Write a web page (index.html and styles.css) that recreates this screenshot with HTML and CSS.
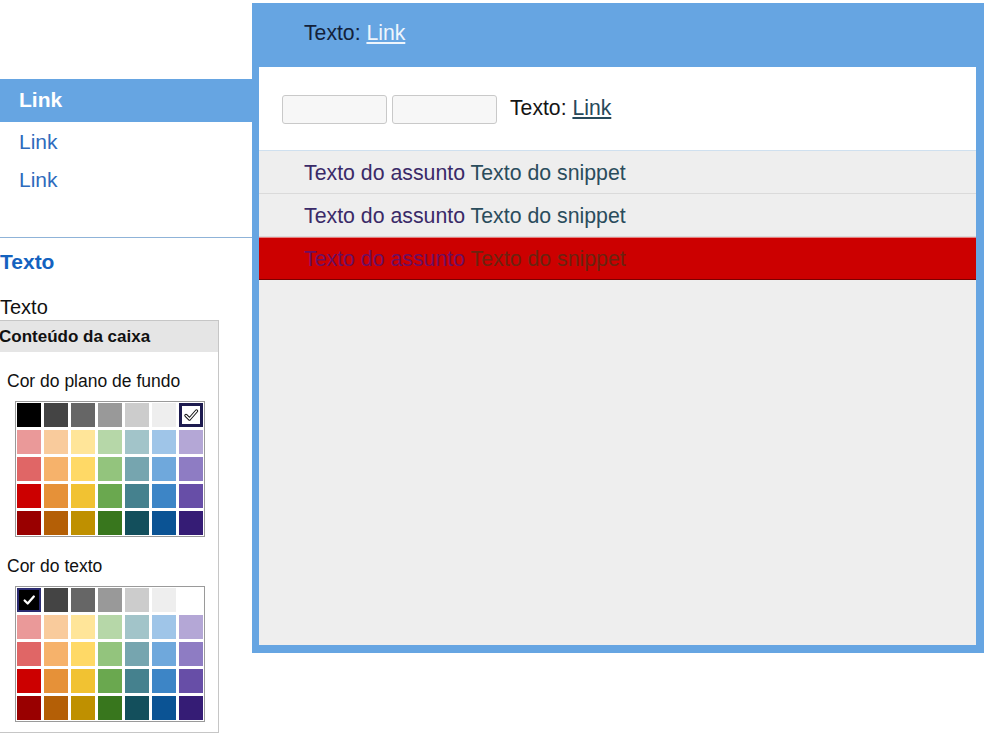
FILE: index.html
```html
<!DOCTYPE html>
<html lang="pt">
<head>
<meta charset="utf-8">
<title>Tema</title>
<link rel="stylesheet" href="styles.css">
</head>
<body>
<div class="page">
  <aside class="left">
    <nav class="nav">
      <div class="nav-item active">Link</div>
      <div class="nav-item"><a class="nav-link" href="#">Link</a></div>
      <div class="nav-item"><a class="nav-link" href="#">Link</a></div>
    </nav>
    <div class="sep"></div>
    <div class="title">Texto</div>
    <div class="plain">Texto</div>
    <div class="box">
      <div class="box-head">Conteúdo da caixa</div>
      <div class="box-label">Cor do plano de fundo</div>
      <div class="palette">
        <span class="c" style="background:#000000"></span>
        <span class="c" style="background:#444444"></span>
        <span class="c" style="background:#666666"></span>
        <span class="c" style="background:#999999"></span>
        <span class="c" style="background:#cccccc"></span>
        <span class="c" style="background:#eeeeee"></span>
        <span class="c sel-white" style="background:#ffffff"><svg class="chk" viewBox="0 0 16 16" width="16" height="16"><path d="M3 8.5 L6.5 12 L13.5 4" fill="none" stroke="#111" stroke-width="3.4" stroke-linecap="round" stroke-linejoin="round"/><path d="M3 8.5 L6.5 12 L13.5 4" fill="none" stroke="#fff" stroke-width="1.4" stroke-linecap="round" stroke-linejoin="round"/></svg></span>
        <span class="c" style="background:#ea9999"></span>
        <span class="c" style="background:#f9cb9c"></span>
        <span class="c" style="background:#ffe599"></span>
        <span class="c" style="background:#b6d7a8"></span>
        <span class="c" style="background:#a2c4c9"></span>
        <span class="c" style="background:#9fc5e8"></span>
        <span class="c" style="background:#b4a7d6"></span>
        <span class="c" style="background:#e06666"></span>
        <span class="c" style="background:#f6b26b"></span>
        <span class="c" style="background:#ffd966"></span>
        <span class="c" style="background:#93c47d"></span>
        <span class="c" style="background:#76a5af"></span>
        <span class="c" style="background:#6fa8dc"></span>
        <span class="c" style="background:#8e7cc3"></span>
        <span class="c" style="background:#cc0000"></span>
        <span class="c" style="background:#e69138"></span>
        <span class="c" style="background:#f1c232"></span>
        <span class="c" style="background:#6aa84f"></span>
        <span class="c" style="background:#45818e"></span>
        <span class="c" style="background:#3d85c6"></span>
        <span class="c" style="background:#674ea7"></span>
        <span class="c" style="background:#990000"></span>
        <span class="c" style="background:#b45f06"></span>
        <span class="c" style="background:#bf9000"></span>
        <span class="c" style="background:#38761d"></span>
        <span class="c" style="background:#134f5c"></span>
        <span class="c" style="background:#0b5394"></span>
        <span class="c" style="background:#351c75"></span>
      </div>
      <div class="box-label">Cor do texto</div>
      <div class="palette">
        <span class="c sel-black" style="background:#000000"><svg class="chk" viewBox="0 0 16 16" width="14" height="14"><path d="M3 8.5 L6.5 12 L13.5 4" fill="none" stroke="#fff" stroke-width="2.6" stroke-linecap="round" stroke-linejoin="round"/></svg></span>
        <span class="c" style="background:#444444"></span>
        <span class="c" style="background:#666666"></span>
        <span class="c" style="background:#999999"></span>
        <span class="c" style="background:#cccccc"></span>
        <span class="c" style="background:#eeeeee"></span>
        <span class="c" style="background:#ffffff"></span>
        <span class="c" style="background:#ea9999"></span>
        <span class="c" style="background:#f9cb9c"></span>
        <span class="c" style="background:#ffe599"></span>
        <span class="c" style="background:#b6d7a8"></span>
        <span class="c" style="background:#a2c4c9"></span>
        <span class="c" style="background:#9fc5e8"></span>
        <span class="c" style="background:#b4a7d6"></span>
        <span class="c" style="background:#e06666"></span>
        <span class="c" style="background:#f6b26b"></span>
        <span class="c" style="background:#ffd966"></span>
        <span class="c" style="background:#93c47d"></span>
        <span class="c" style="background:#76a5af"></span>
        <span class="c" style="background:#6fa8dc"></span>
        <span class="c" style="background:#8e7cc3"></span>
        <span class="c" style="background:#cc0000"></span>
        <span class="c" style="background:#e69138"></span>
        <span class="c" style="background:#f1c232"></span>
        <span class="c" style="background:#6aa84f"></span>
        <span class="c" style="background:#45818e"></span>
        <span class="c" style="background:#3d85c6"></span>
        <span class="c" style="background:#674ea7"></span>
        <span class="c" style="background:#990000"></span>
        <span class="c" style="background:#b45f06"></span>
        <span class="c" style="background:#bf9000"></span>
        <span class="c" style="background:#38761d"></span>
        <span class="c" style="background:#134f5c"></span>
        <span class="c" style="background:#0b5394"></span>
        <span class="c" style="background:#351c75"></span>
      </div>
    </div>
  </aside>
  <main class="panel">
    <div class="panel-top">Texto: <a class="top-link" href="#">Link</a></div>
    <div class="panel-inner">
      <div class="toolbar">
        <input class="field" type="text">
        <input class="field" type="text">
        <span class="tool-text">Texto: <a class="tool-link" href="#">Link</a></span>
      </div>
      <div class="row"><span class="subj">Texto do assunto</span> <span class="snip">Texto do snippet</span></div>
      <div class="row"><span class="subj">Texto do assunto</span> <span class="snip">Texto do snippet</span></div>
      <div class="row row-sel"><span class="subj">Texto do assunto</span> <span class="snip">Texto do snippet</span></div>
    </div>
  </main>
</div>
</body>
</html>
```
FILE: styles.css
```css
* { box-sizing: border-box; }
html, body {
  margin: 0;
  padding: 0;
  background: #ffffff;
  font-family: "Liberation Sans", Arial, sans-serif;
  overflow: hidden;
}
.page {
  display: flex;
  width: 984px;
  height: 752px;
}
.left {
  width: 252px;
  flex: none;
  padding-top: 79px;
}
.nav-item {
  height: 38px;
  line-height: 40px;
  padding-left: 19px;
  font-size: 21px;
}
.nav-item.active {
  height: 43px;
  line-height: 41px;
  background: #66a5e2;
  color: #ffffff;
  font-weight: bold;
}
.nav-link {
  color: #2e6bbd;
  text-decoration: none;
}
.sep {
  margin-top: 39px;
  height: 1px;
  background: #8fb3d8;
}
.title {
  margin-top: 12px;
  line-height: 24px;
  font-size: 21px;
  font-weight: bold;
  color: #1462bf;
}
.plain {
  margin-top: 21px;
  line-height: 24px;
  font-size: 20px;
  color: #111111;
}
.box {
  margin-top: 1px;
  margin-left: -3px;
  width: 222px;
  border: 1px solid #c6c6c6;
  padding-bottom: 10px;
}
.box-head {
  height: 31px;
  line-height: 31px;
  background: #e5e5e5;
  padding-left: 1px;
  font-size: 17px;
  font-weight: bold;
  color: #111111;
}
.box-label {
  margin-top: 18px;
  padding-left: 9px;
  line-height: 22px;
  font-size: 17.5px;
  color: #111111;
}
.palette {
  margin: 9px 0 0 17px;
  width: 190px;
  border: 1px solid #9a9a9a;
  padding: 1px;
  display: grid;
  grid-template-columns: repeat(7, 24px);
  grid-auto-rows: 24px;
  gap: 3px;
  background: #ffffff;
}
.c {
  display: flex;
  align-items: center;
  justify-content: center;
}
.sel-white {
  border: 3px solid #1d1b4f;
}
.sel-black {
  border: 2px solid #2a2a70;
}
.panel {
  width: 732px;
  height: 650px;
  margin-top: 3px;
  flex: none;
  background: #66a5e2;
  display: flex;
  flex-direction: column;
}
.panel-top {
  height: 64px;
  line-height: 60px;
  padding-left: 52px;
  font-size: 21.2px;
  color: #13213a;
}
.top-link {
  color: #eef5fc;
  text-decoration: underline;
}
.panel-inner {
  flex: 1;
  margin: 0 8px 8px 7px;
  background: #eeeeee;
}
.toolbar {
  height: 84px;
  background: #ffffff;
  border-bottom: 1px solid #cfe0ef;
  display: flex;
  align-items: center;
  padding-left: 23px;
  padding-top: 2px;
}
.field {
  width: 105px;
  height: 29px;
  margin: 0 5px 0 0;
  border: 1px solid #c9c9c9;
  border-radius: 3px;
  background: #f7f7f7;
  padding: 0;
}
.tool-text {
  margin-left: 8px;
  font-size: 21.2px;
  color: #151515;
  line-height: 24px;
  margin-top: -3px;
}
.tool-link {
  color: #27495a;
  text-decoration: underline;
}
.row {
  height: 43px;
  line-height: 44px;
  padding-left: 45px;
  font-size: 21.3px;
  border-bottom: 1px solid #dadada;
}
.subj { color: #3a2a68; }
.snip { color: #2a4c5c; }
.row-sel {
  background: #cc0000;
  border-top: 1px solid #e88080;
  border-bottom: 1px solid #7c0000;
  line-height: 42px;
}
.row-sel .subj { color: #6a0f62; }
.row-sel .snip { color: #6a2410; }
```
